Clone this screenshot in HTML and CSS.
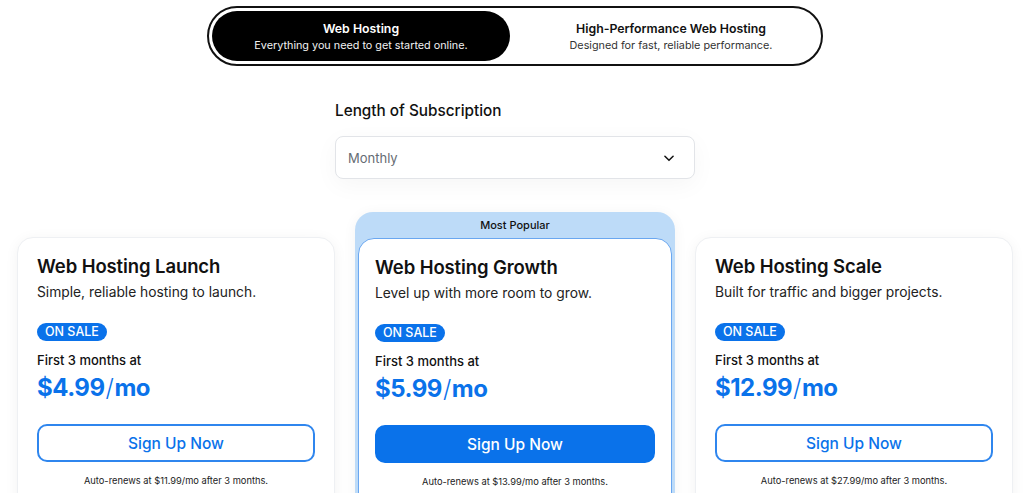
FILE: index.html
```html
<!DOCTYPE html>
<html lang="en">
<head>
  <meta charset="UTF-8" />
  <meta name="viewport" content="width=device-width, initial-scale=1.0"/>
  <title>Web Hosting Plans</title>
  <link rel="stylesheet" href="styles.css">
</head>
<body>

  <!-- Plan type toggle -->
  <div class="toggle">
    <div class="toggle-option active">
      <strong>Web Hosting</strong>
      <span>Everything you need to get started online.</span>
    </div>
    <div class="toggle-option">
      <strong>High-Performance Web Hosting</strong>
      <span>Designed for fast, reliable performance.</span>
    </div>
  </div>

  <!-- Subscription length -->
  <div class="term">
    <label for="term">Length of Subscription</label>
    <div class="select">
      <span>Monthly</span>
      <svg width="14" height="14" viewBox="0 0 24 24" fill="none" stroke="#111" stroke-width="2.6" stroke-linecap="round" stroke-linejoin="round"><path d="M5 9l7 7 7-7"/></svg>
    </div>
  </div>

  <!-- Plans -->
  <div class="plans">
    <div class="plan-wrap">
      <div class="plan">
        <h3>Web Hosting Launch</h3>
        <p class="desc">Simple, reliable hosting to launch.</p>
        <span class="badge">ON SALE</span>
        <p class="intro">First 3 months at</p>
        <p class="price">$4.99<span class="slash">/</span>mo</p>
        <button class="button">Sign Up Now</button>
        <p class="renew">Auto-renews at $11.99/mo after 3 months.</p>
      </div>
    </div>

    <div class="plan-wrap popular">
      <div class="popular-label">Most Popular</div>
      <div class="plan">
        <h3>Web Hosting Growth</h3>
        <p class="desc">Level up with more room to grow.</p>
        <span class="badge">ON SALE</span>
        <p class="intro">First 3 months at</p>
        <p class="price">$5.99<span class="slash">/</span>mo</p>
        <button class="button filled">Sign Up Now</button>
        <p class="renew">Auto-renews at $13.99/mo after 3 months.</p>
      </div>
    </div>

    <div class="plan-wrap">
      <div class="plan">
        <h3>Web Hosting Scale</h3>
        <p class="desc">Built for traffic and bigger projects.</p>
        <span class="badge">ON SALE</span>
        <p class="intro">First 3 months at</p>
        <p class="price">$12.99<span class="slash">/</span>mo</p>
        <button class="button">Sign Up Now</button>
        <p class="renew">Auto-renews at $27.99/mo after 3 months.</p>
      </div>
    </div>
  </div>

</body>
</html>
```

FILE: styles.css
```css
* {
  box-sizing: border-box;
}

body {
  margin: 0;
  font-family: Inter, "Noto Sans", sans-serif;
  background-color: white;
  color: #111;
  padding: 6px 11px 0 17px;
  overflow: hidden;
  height: 493px;
}

p {
  margin: 0;
}

/* toggle */
.toggle {
  display: flex;
  width: 616px;
  height: 60px;
  margin: 0 0 0 190px;
  padding: 3px;
  border: 2px solid #111;
  border-radius: 30px;
  background: white;
}

.toggle-option {
  flex: 1;
  display: flex;
  flex-direction: column;
  align-items: center;
  justify-content: center;
  gap: 3px;
  padding-left: 14px;
  border-radius: 26px;
}

.toggle-option strong {
  font-size: 12.3px;
  font-weight: 600;
}

.toggle-option span {
  font-size: 10.8px;
  color: #333;
}

.toggle-option.active {
  flex: 0 0 298px;
  padding-left: 0;
  background: black;
  color: white;
}

.toggle-option.active span {
  color: #f2f2f2;
}

/* subscription */
.term {
  width: 360px;
  margin: 35px 0 0 318px;
}

.term label {
  display: block;
  font-size: 15.3px;
  font-weight: 500;
  margin-bottom: 16px;
}

.select {
  display: flex;
  align-items: center;
  justify-content: space-between;
  height: 43px;
  padding: 0 18px 0 12px;
  border: 1px solid #e2e4e8;
  border-radius: 8px;
  background: white;
  box-shadow: 0 6px 24px rgba(0, 0, 0, 0.04);
}

.select span {
  font-size: 13px;
  color: #666c74;
}

/* plans */
.plans {
  display: grid;
  grid-template-columns: 318px 320px 318px;
  column-gap: 20px;
  margin-top: 33px;
  align-items: end;
}

.plan-wrap {
  padding-top: 25px;
}

.plan {
  background: white;
  border: 1px solid #eef0f3;
  border-radius: 16px;
  padding: 17px 19px 0 19px;
  height: 290px;
  box-shadow: 0 2px 14px rgba(0, 0, 0, 0.05);
}

.popular {
  padding: 0 3px;
  background: #bddbf8;
  border-radius: 18px 18px 0 0;
  box-shadow: 0 2px 14px rgba(0, 0, 0, 0.05);
}

.popular-label {
  height: 26px;
  display: flex;
  align-items: center;
  justify-content: center;
  font-size: 11px;
  font-weight: 500;
}

.popular .plan {
  border: 1px solid #6aa7f0;
  padding: 17px 16px 0 16px;
  height: 289px;
  box-shadow: none;
}

h3 {
  font-size: 18.5px;
  font-weight: 600;
  margin: 0 0 7px;
  letter-spacing: -0.1px;
}

.desc {
  font-size: 13.8px;
  color: #222;
  margin-bottom: 20px;
}

.badge {
  display: inline-block;
  background: #0a72ea;
  color: white;
  font-size: 12.5px;
  font-weight: 500;
  padding: 1px 8px;
  border-radius: 10px;
  line-height: 16px;
}

.intro {
  font-size: 13px;
  font-weight: 500;
  margin: 11px 0 5px;
}

.price {
  font-size: 24px;
  font-weight: 700;
  color: #0a72ea;
  letter-spacing: -0.5px;
}

.slash {
  font-weight: 300;
  margin: 0 1px;
}

.button {
  display: block;
  width: 100%;
  height: 38px;
  margin-top: 22px;
  background: white;
  color: #0a72ea;
  border: 2px solid #2f86ee;
  border-radius: 10px;
  font-family: inherit;
  font-size: 15.5px;
  font-weight: 500;
  cursor: pointer;
}

.button.filled {
  background: #0a72ea;
  border-color: #0a72ea;
  color: white;
}

.renew {
  margin-top: 13px;
  font-size: 9.3px;
  text-align: center;
  color: #222;
}
```
